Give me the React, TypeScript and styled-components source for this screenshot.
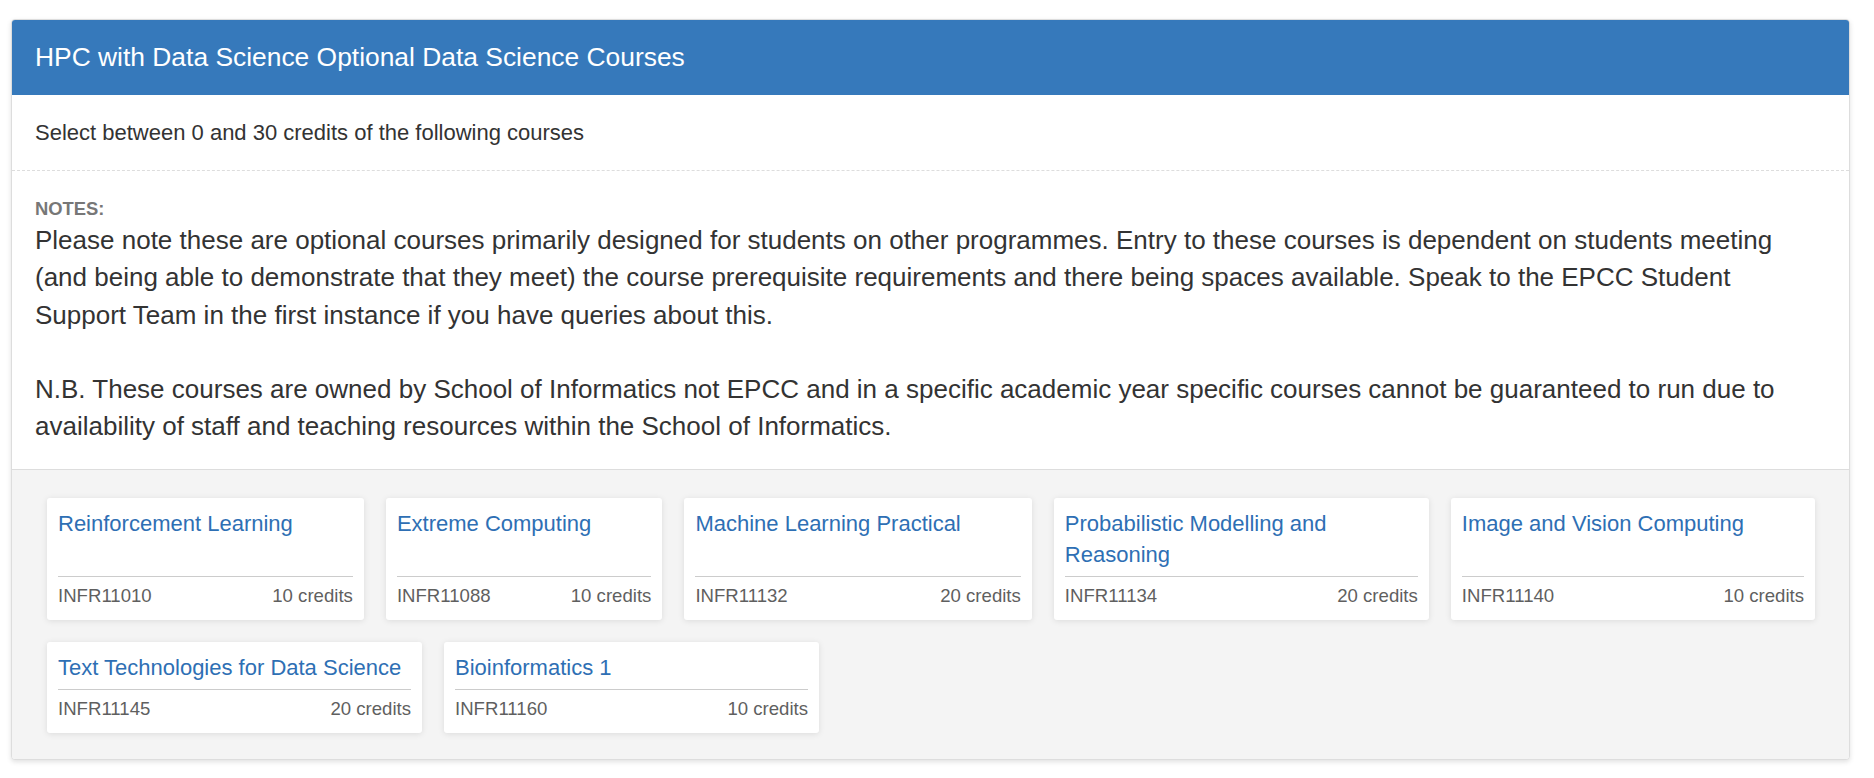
import {styled, createGlobalStyle} from 'styled-components';

const GlobalStyle = createGlobalStyle`
    body {
        margin: 0;
        background: #ffffff;
        font-family: "Liberation Sans", Arial, Helvetica, sans-serif;
        color: #333333;
    }
`;

const Page = styled.div`
    padding: 19px 24px 16px 11px;
`;

const Panel = styled.section`
    border: 1px solid #dddddd;
    border-radius: 4px;
    background: #ffffff;
    box-shadow: 0 2px 5px rgba(0, 0, 0, 0.12);
    overflow: hidden;
`;

const PanelHeading = styled.h3`
    margin: 0;
    padding: 20px 23px;
    background: #3679bb;
    color: #ffffff;
    font-size: 26.4px;
    font-weight: normal;
    line-height: 35px;
`;

const Intro = styled.div`
    padding: 22px 23px;
    font-size: 22px;
    line-height: 31px;
    border-bottom: 1px dashed #dddddd;
`;

const Notes = styled.div`
    padding: 25px 23px 23px;
    border-bottom: 1px solid #dddddd;
`;

const NotesLabel = styled.div`
    font-size: 18.4px;
    line-height: 26px;
    font-weight: bold;
    color: #777777;
`;

const NotesText = styled.p`
    margin: 0;
    font-size: 26px;
    line-height: 37.3px;
    color: #333333;
`;

const CourseArea = styled.div`
    display: flex;
    flex-wrap: wrap;
    gap: 22px;
    padding: 28px 34px 26px 35px;
    background: #f4f4f4;
`;

const CourseCard = styled.div`
    flex: 1 1 auto;
    max-width: 375px;
    display: flex;
    flex-direction: column;
    padding: 10px 11px 11px;
    background: #ffffff;
    border-radius: 3px;
    box-shadow: 0 1px 6px rgba(0, 0, 0, 0.1);
    box-sizing: border-box;
`;

const CourseTitle = styled.a`
    flex-grow: 1;
    margin-bottom: 6px;
    font-size: 22px;
    line-height: 31px;
    color: #2e6fb4;
    text-decoration: none;
`;

const CourseFooter = styled.div`
    display: flex;
    justify-content: space-between;
    gap: 12px;
    padding-top: 6px;
    border-top: 1px solid #cccccc;
    font-size: 18.6px;
    line-height: 26px;
    color: #5f5f5f;
`;

const courses = [
    {title: 'Reinforcement Learning', code: 'INFR11010', credits: 10},
    {title: 'Extreme Computing', code: 'INFR11088', credits: 10},
    {title: 'Machine Learning Practical', code: 'INFR11132', credits: 20},
    {title: 'Probabilistic Modelling and Reasoning', code: 'INFR11134', credits: 20},
    {title: 'Image and Vision Computing', code: 'INFR11140', credits: 10},
    {title: 'Text Technologies for Data Science', code: 'INFR11145', credits: 20},
    {title: 'Bioinformatics 1', code: 'INFR11160', credits: 10},
];

export default function App(){
    return (
        <Page>
            <GlobalStyle/>
            <Panel>
                <PanelHeading>HPC with Data Science Optional Data Science Courses</PanelHeading>
                <Intro>Select between 0 and 30 credits of the following courses</Intro>
                <Notes>
                    <NotesLabel>NOTES:</NotesLabel>
                    <NotesText>
                        Please note these are optional courses primarily designed for students on other programmes. Entry to these courses is dependent on students meeting (and being able to demonstrate that they meet) the course prerequisite requirements and there being spaces available. Speak to the EPCC Student Support Team in the first instance if you have queries about this.
                        <br/><br/>
                        N.B. These courses are owned by School of Informatics not EPCC and in a specific academic year specific courses cannot be guaranteed to run due to availability of staff and teaching resources within the School of Informatics.
                    </NotesText>
                </Notes>
                <CourseArea>
                    {courses.map((c) => (
                        <CourseCard key={c.code}>
                            <CourseTitle href="#">{c.title}</CourseTitle>
                            <CourseFooter>
                                <span>{c.code}</span>
                                <span>{c.credits} credits</span>
                            </CourseFooter>
                        </CourseCard>
                    ))}
                </CourseArea>
            </Panel>
        </Page>
    );
}
